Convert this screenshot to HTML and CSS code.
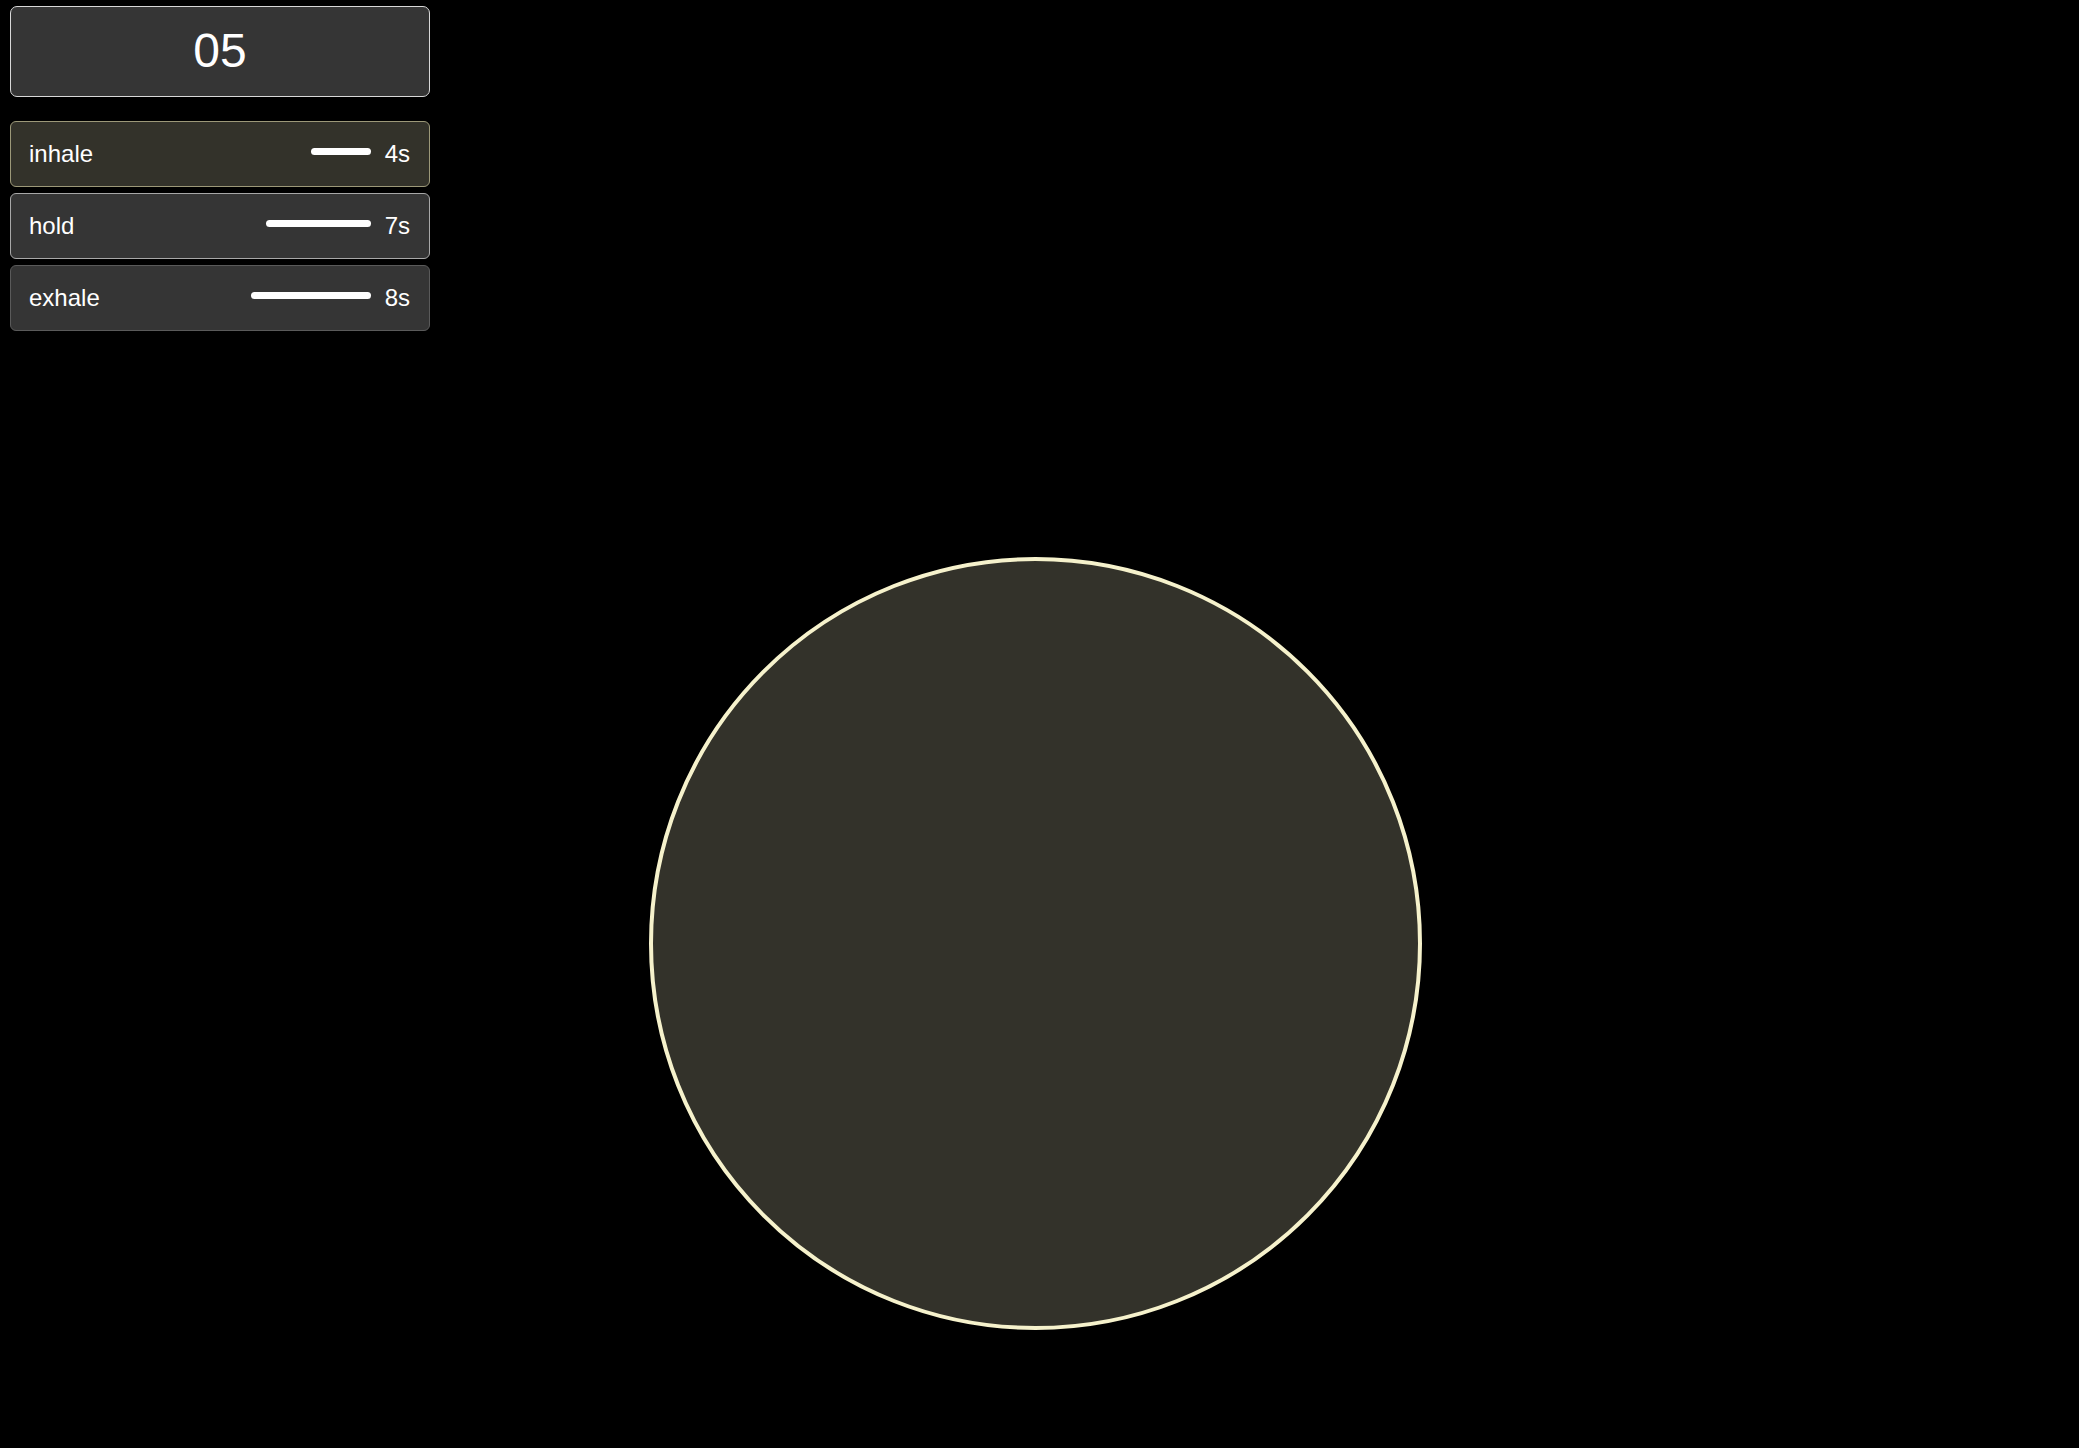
FILE: index.html
```html
<!DOCTYPE html>
<html>
<head>
<meta charset="utf-8">
<link rel="stylesheet" href="styles.css">
</head>
<body>
<div class="app">
  <div class="panel">
    <div class="counter">05</div>
    <div class="phases">
      <div class="phase active">
        <span class="label">inhale</span>
        <span class="bar" style="width:60px"></span>
        <span class="value">4s</span>
      </div>
      <div class="phase hold">
        <span class="label">hold</span>
        <span class="bar" style="width:105px"></span>
        <span class="value">7s</span>
      </div>
      <div class="phase exhale">
        <span class="label">exhale</span>
        <span class="bar" style="width:120px"></span>
        <span class="value">8s</span>
      </div>
    </div>
  </div>
  <div class="stage">
    <div class="circle"></div>
  </div>
</div>
</body>
</html>
```
FILE: styles.css
```css
html, body {
  margin: 0;
  padding: 0;
  background: #000;
  color: #fff;
  font-family: "Liberation Sans", Arial, sans-serif;
}
.app {
  padding: 6px 10px 0 10px;
  width: 2079px;
  height: 1448px;
  box-sizing: border-box;
  overflow: hidden;
}
.panel {
  width: 420px;
  display: flex;
  flex-direction: column;
}
.counter {
  height: 91px;
  box-sizing: border-box;
  background: #353535;
  border: 1px solid #d8d8d8;
  border-radius: 7px;
  display: flex;
  align-items: center;
  justify-content: center;
  font-size: 48px;
  padding-bottom: 3px;
}
.phases {
  margin-top: 24px;
  display: flex;
  flex-direction: column;
  gap: 6px;
}
.phase {
  height: 66px;
  box-sizing: border-box;
  background: #353535;
  border: 1px solid #555;
  border-radius: 6px;
  display: flex;
  align-items: center;
  padding: 0 19px 0 18px;
  font-size: 24px;
}
.phase.active {
  background: #33322a;
  border-color: #9c9878;
}
.phase.hold {
  border-color: #a8a8a8;
}
.phase.exhale {
  border-color: #5a5a5a;
}
.label {
  flex: 1;
}
.bar {
  height: 7px;
  border-radius: 4px;
  background: #fff;
  margin-bottom: 5px;
}
.value {
  width: 39px;
  text-align: right;
}
.stage {
  display: flex;
  justify-content: center;
  padding-top: 226px;
  padding-right: 8px;
}
.circle {
  width: 773px;
  height: 773px;
  box-sizing: border-box;
  border-radius: 50%;
  border: 4px solid #f6f2cc;
  background: #33322a;
}
```
